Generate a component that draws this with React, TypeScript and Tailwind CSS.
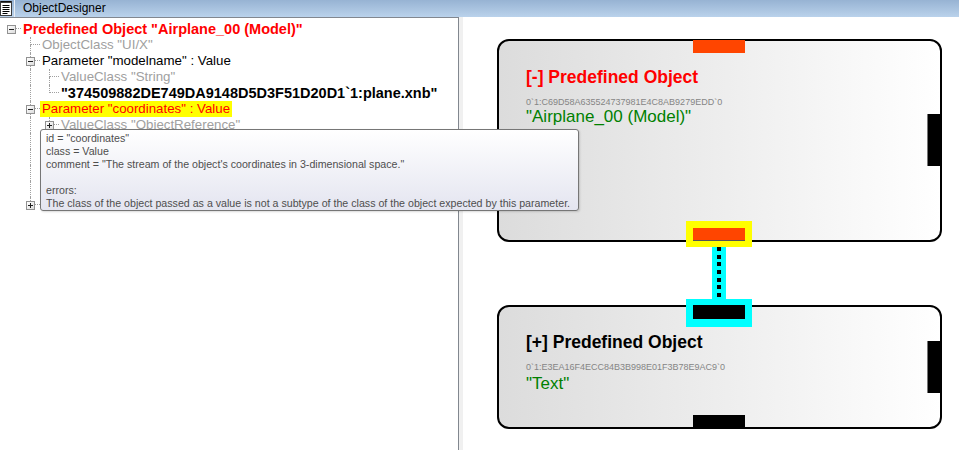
import React from "react";

type Row = {
  level: number;
  guides: boolean[];
  exp?: "minus" | "plus";
  last?: boolean;
  root?: boolean;
  text: string;
  cls: string;
};

const rows: Row[] = [
  { level: 0, guides: [], exp: "minus", root: true, last: true, text: 'Predefined Object "Airplane_00 (Model)"', cls: "text-[#ff0000] font-bold text-[14.5px]" },
  { level: 1, guides: [false], text: 'ObjectClass "UI/X"', cls: "text-[#a0a0a0] text-[13.3px]" },
  { level: 1, guides: [false], exp: "minus", text: 'Parameter "modelname" : Value', cls: "text-black text-[13.3px]" },
  { level: 2, guides: [false, true], text: 'ValueClass "String"', cls: "text-[#a0a0a0] text-[13.3px]" },
  { level: 2, guides: [false, true], last: true, text: '"374509882DE749DA9148D5D3F51D20D1`1:plane.xnb"', cls: "text-black font-bold text-[14.5px]" },
  { level: 1, guides: [false], exp: "minus", text: 'Parameter "coordinates" : Value', cls: "text-[#ff0000] bg-[#ffff00] text-[13.3px]" },
  { level: 2, guides: [false, true], exp: "plus", text: 'ValueClass "ObjectReference"', cls: "text-[#a0a0a0] text-[13.3px]" },
  { level: 2, guides: [false, true], text: "", cls: "" },
  { level: 2, guides: [false, true], text: "", cls: "" },
  { level: 2, guides: [false, true], text: "", cls: "" },
  { level: 2, guides: [false, true], last: true, text: "", cls: "" },
  { level: 1, guides: [false], exp: "plus", last: true, text: "", cls: "" },
];

function Expander({ kind }: { kind: "minus" | "plus" }) {
  return (
    <div className="absolute left-[5px] top-[4px] w-[9px] h-[9px] border border-[#919191] bg-linear-to-br from-white to-[#dcdcdc] flex items-center justify-center">
      <div className="relative w-[5px] h-[5px] flex items-center justify-center">
        <div className="w-[5px] h-px bg-[#202020]" />
        {kind === "plus" && <div className="absolute left-[2px] top-0 w-px h-[5px] bg-[#202020]" />}
      </div>
    </div>
  );
}

function TreeRow({ r }: { r: Row }) {
  return (
    <div className="flex h-[16px] items-stretch">
      {r.guides.map((g, i) => (
        <div key={i} className="w-[19px] shrink-0">
          {g && <div className="ml-[9px] h-full w-0 border-l border-dotted border-[#a0a0a0]" />}
        </div>
      ))}
      <div className="relative w-[19px] shrink-0 grid grid-cols-[9px_10px] grid-rows-[8px_8px]">
        <div />
        <div className={`border-b border-dotted border-[#a0a0a0] ${r.root ? "" : "border-l"}`} />
        <div />
        <div className={r.last ? "" : "border-l border-dotted border-[#a0a0a0]"} />
        {r.exp && <Expander kind={r.exp} />}
      </div>
      {r.text && (
        <div className={`px-[2px] h-[16px] leading-[16px] whitespace-nowrap ${r.cls}`}>{r.text}</div>
      )}
    </div>
  );
}

function NotepadIcon() {
  return (
    <svg width="15" height="17" viewBox="0 0 15 17" className="shrink-0">
      <rect x="0.5" y="1.5" width="11" height="14" fill="#ffffff" stroke="#3a3a3a" />
      <line x1="1" y1="2" x2="11" y2="2" stroke="#000" strokeWidth="1.5" />
      <line x1="2.5" y1="5.5" x2="9.5" y2="5.5" stroke="#000" />
      <line x1="2.5" y1="7.5" x2="9.5" y2="7.5" stroke="#000" />
      <line x1="2.5" y1="9.5" x2="9.5" y2="9.5" stroke="#000" />
      <line x1="2.5" y1="11.5" x2="9.5" y2="11.5" stroke="#000" />
      <line x1="2.5" y1="13.5" x2="7.5" y2="13.5" stroke="#000" />
      <line x1="14.5" y1="0" x2="14.5" y2="17" stroke="#e8eef5" />
    </svg>
  );
}

export default function App() {
  return (
    <div className="relative w-[959px] h-[450px] overflow-hidden flex flex-col bg-white font-['Liberation_Sans',Arial,sans-serif]">
      {/* title bar */}
      <div className="h-[17px] shrink-0 flex items-center bg-linear-to-b from-[#97b3d3] to-[#bad2eb]">
        <NotepadIcon />
        <span className="ml-[8px] text-[12px] leading-[17px] text-black">ObjectDesigner</span>
      </div>

      <div className="flex flex-1 min-h-0">
        {/* tree panel */}
        <div className="w-[459px] shrink-0 border-t border-r border-[#82878f] bg-white pt-[3px] pl-[2px]">
          {rows.map((r, i) => (
            <TreeRow key={i} r={r} />
          ))}
        </div>
        {/* splitter */}
        <div className="w-[4px] shrink-0 bg-[#f0f0f0]" />
        {/* canvas */}
        <div className="relative flex-1 bg-white">
          {/* node 1 */}
          <div className="absolute left-[34px] top-[22px] w-[445px] h-[203px] rounded-[12px] border-2 border-black bg-linear-to-r from-[#dcdcdc] to-[#ffffff] pl-[27px] pt-[26px]">
            <div className="text-[17.5px] leading-[20px] font-bold text-[#ff0000] whitespace-nowrap">[-] Predefined Object</div>
            <div className="mt-[10px] text-[9px] leading-[10px] text-[#858585] whitespace-nowrap">0`1:C69D58A635524737981E4C8AB9279EDD`0</div>
            <div className="mt-[0px] text-[17px] leading-[20px] text-[#008000] whitespace-nowrap">"Airplane_00 (Model)"</div>
          </div>
          <div className="absolute left-[230px] top-[23px] w-[52px] h-[13px] bg-[#ff4500]" />
          <div className="absolute left-[464px] top-[97px] w-[14px] h-[52px] bg-black border-l border-[#777]" />

          {/* selected output port */}
          <div className="absolute left-[223px] top-[204px] w-[66px] h-[26px] bg-[#ffff00] p-[7px] pb-[6px]">
            <div className="w-[52px] h-[13px] bg-[#ff4500] border-b border-[#555]" />
          </div>

          {/* connection */}
          <div className="absolute left-[249px] top-[230px] w-[14px] h-[52px] bg-[#00ffff] flex justify-center">
            <div className="w-[4px] h-full bg-[repeating-linear-gradient(to_bottom,#000_0px,#000_4px,transparent_4px,transparent_7.7px)]" />
          </div>

          {/* node 2 */}
          <div className="absolute left-[34px] top-[288px] w-[445px] h-[124px] rounded-[12px] border-2 border-black bg-linear-to-r from-[#dcdcdc] to-[#ffffff] pl-[27px] pt-[25px]">
            <div className="text-[17.5px] leading-[20px] font-bold text-black whitespace-nowrap">[+] Predefined Object</div>
            <div className="mt-[10px] text-[9px] leading-[10px] text-[#858585] whitespace-nowrap">0`1:E3EA16F4ECC84B3B998E01F3B78E9AC9`0</div>
            <div className="mt-[2px] text-[17px] leading-[20px] text-[#008000] whitespace-nowrap">"Text"</div>
          </div>
          <div className="absolute left-[223px] top-[282px] w-[66px] h-[28px] bg-[#00ffff] px-[7px] pt-[6px]">
            <div className="w-[52px] h-[14px] bg-black" />
          </div>
          <div className="absolute left-[464px] top-[324px] w-[14px] h-[52px] bg-black border-l border-[#777]" />
          <div className="absolute left-[230px] top-[398px] w-[52px] h-[13px] bg-black" />
        </div>
      </div>

      {/* tooltip */}
      <div className="absolute left-[40px] top-[129px] w-[539px] h-[82px] rounded-[3px] border border-[#767676] bg-linear-to-b from-white to-[#e4e5f0] pl-[5px] pt-[2px] text-[10.65px] leading-[13px] text-[#4e4e4e] shadow-[1px_1px_2px_rgba(0,0,0,0.15)]">
        <div>id = "coordinates"</div>
        <div>class = Value</div>
        <div>comment = "The stream of the object's coordinates in 3-dimensional space."</div>
        <div>&nbsp;</div>
        <div>errors:</div>
        <div className="whitespace-nowrap">The class of the object passed as a value is not a subtype of the class of the object expected by this parameter.</div>
      </div>
    </div>
  );
}
